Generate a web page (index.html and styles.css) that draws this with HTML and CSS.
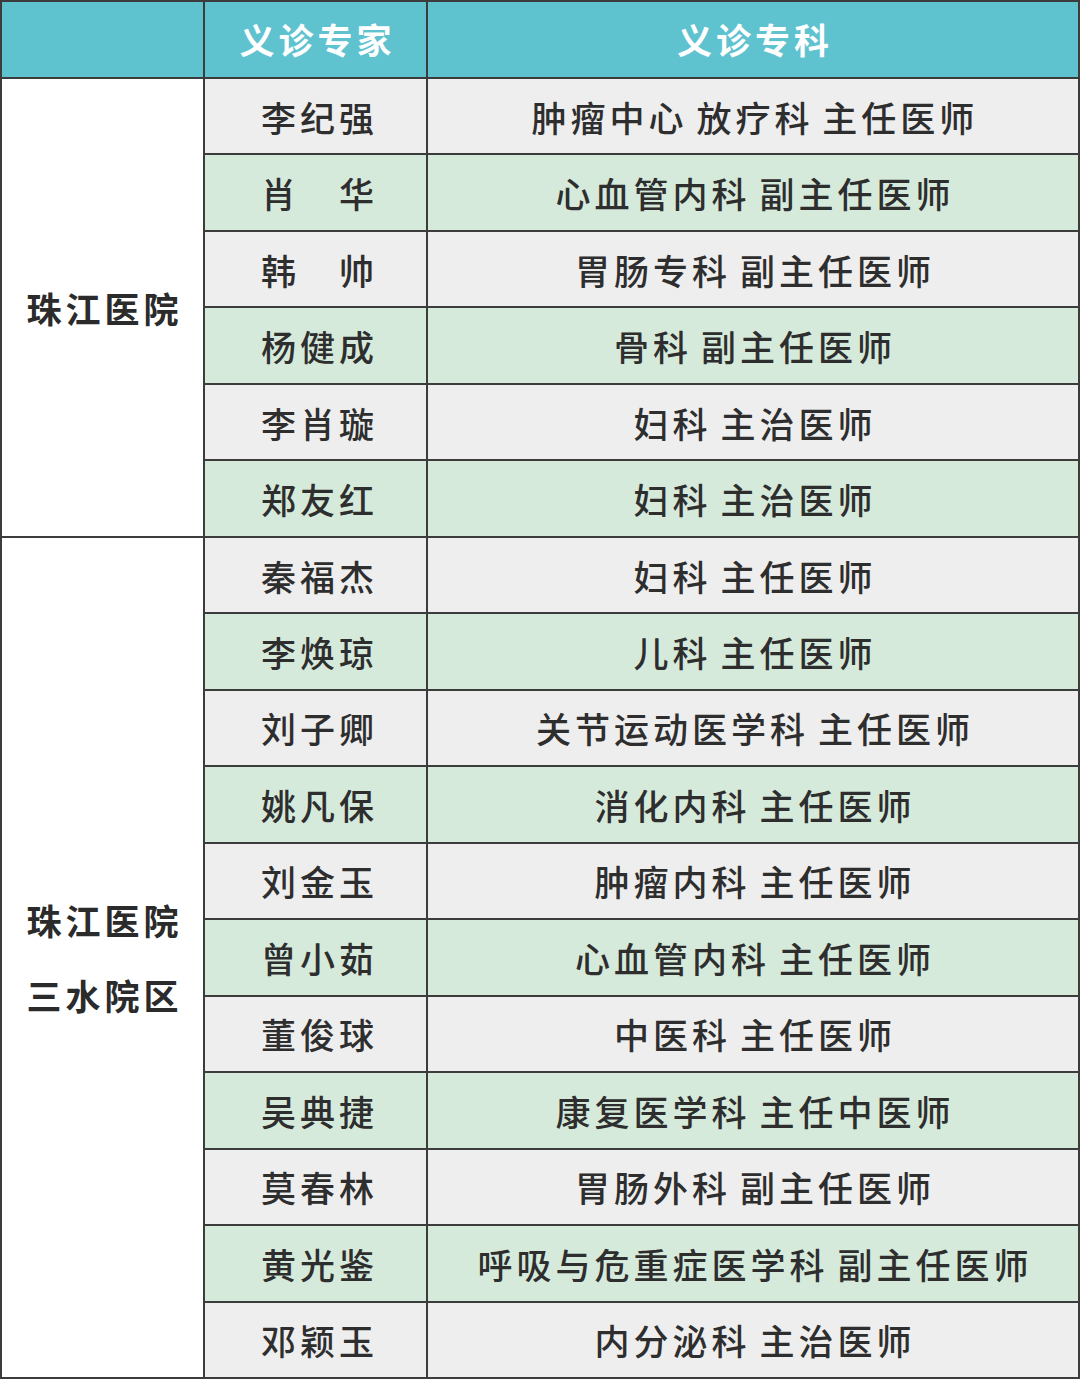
FILE: index.html
```html
<!DOCTYPE html>
<html lang="zh-CN">
<head>
<meta charset="utf-8">
<link rel="stylesheet" href="styles.css">
</head>
<body>
<div class="table">
  <div class="cell head"></div>
  <div class="cell head">义诊专家</div>
  <div class="cell head">义诊专科</div>

  <div class="cell hosp g1">珠江医院</div>
  <div class="cell hosp g2"><span>珠江医院</span><span>三水院区</span></div>

  <div class="cell name gray">李纪强</div><div class="cell spec gray">肿瘤中心 放疗科 主任医师</div>
  <div class="cell name green">肖　华</div><div class="cell spec green">心血管内科 副主任医师</div>
  <div class="cell name gray">韩　帅</div><div class="cell spec gray">胃肠专科 副主任医师</div>
  <div class="cell name green">杨健成</div><div class="cell spec green">骨科 副主任医师</div>
  <div class="cell name gray">李肖璇</div><div class="cell spec gray">妇科 主治医师</div>
  <div class="cell name green">郑友红</div><div class="cell spec green">妇科 主治医师</div>
  <div class="cell name gray">秦福杰</div><div class="cell spec gray">妇科 主任医师</div>
  <div class="cell name green">李焕琼</div><div class="cell spec green">儿科 主任医师</div>
  <div class="cell name gray">刘子卿</div><div class="cell spec gray">关节运动医学科 主任医师</div>
  <div class="cell name green">姚凡保</div><div class="cell spec green">消化内科 主任医师</div>
  <div class="cell name gray">刘金玉</div><div class="cell spec gray">肿瘤内科 主任医师</div>
  <div class="cell name green">曾小茹</div><div class="cell spec green">心血管内科 主任医师</div>
  <div class="cell name gray">董俊球</div><div class="cell spec gray">中医科 主任医师</div>
  <div class="cell name green">吴典捷</div><div class="cell spec green">康复医学科 主任中医师</div>
  <div class="cell name gray">莫春林</div><div class="cell spec gray">胃肠外科 副主任医师</div>
  <div class="cell name green">黄光鉴</div><div class="cell spec green">呼吸与危重症医学科 副主任医师</div>
  <div class="cell name gray">邓颖玉</div><div class="cell spec gray">内分泌科 主治医师</div>
</div>
</body>
</html>
```

FILE: styles.css
```css
html, body {
  margin: 0;
  padding: 0;
  background: #ffffff;
}

.table {
  box-sizing: border-box;
  width: 1080px;
  height: 1379px;
  padding: 2px;
  background: #3c3c3c;
  display: grid;
  grid-template-columns: 201px 221px 1fr;
  grid-template-rows: 75px repeat(17, 1fr);
  gap: 2px;
  font-family: "Noto Sans CJK SC", "Noto Sans", sans-serif;
  color: #2e2e2e;
}

.cell {
  display: flex;
  align-items: center;
  justify-content: center;
  font-size: 35px;
  font-weight: 500;
  letter-spacing: 4px;
  word-spacing: -3px;
  padding-left: 4px;
  white-space: nowrap;
}

.head {
  background: #5ec2cf;
  color: #ffffff;
  font-weight: 700;
  font-size: 35px;
  letter-spacing: 4px;
  padding-bottom: 2px;
}

.hosp {
  grid-column: 1;
  background: #ffffff;
  font-weight: 700;
  font-size: 35px;
  letter-spacing: 4px;
  flex-direction: column;
  color: #2b2b2b;
}

.hosp span {
  line-height: 75px;
}

.g1 { grid-row: 2 / span 6; }
.g2 { grid-row: 8 / span 11; }

.name {
  grid-column: 2;
  padding-left: 8px;
}

.spec { grid-column: 3; }

.gray { background: #efeeee; }
.green { background: #d6eadc; }
```
